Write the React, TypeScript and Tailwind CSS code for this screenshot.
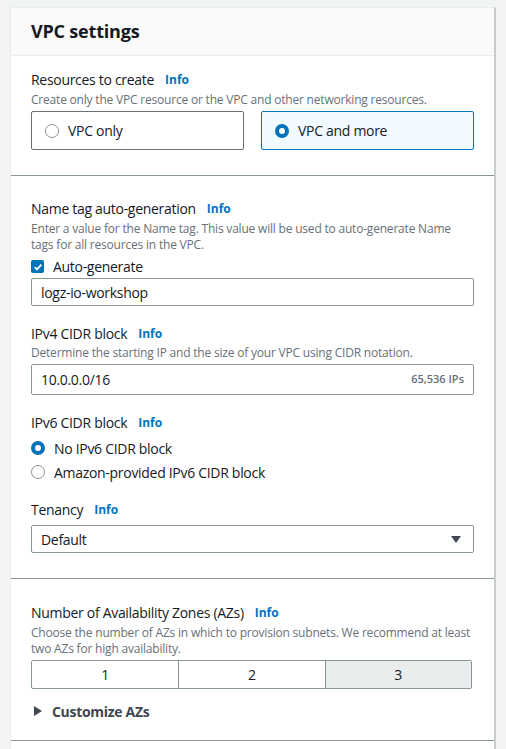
import React from "react";

const font = { fontFamily: '"Open Sans", "Noto Sans", Arial, sans-serif' };

function Info() {
  return <span className="ml-[11px] text-[12px] font-bold tracking-normal text-[#0073bb]">Info</span>;
}

function Label({ children }: { children: React.ReactNode }) {
  return (
    <div className="flex h-5 items-center text-[14px] leading-5 tracking-[-0.3px] text-[#16191f]">
      {children}
      <Info />
    </div>
  );
}

function Desc({ children }: { children: React.ReactNode }) {
  return <p className="text-[12px] leading-4 tracking-[-0.2px] text-[#687078]">{children}</p>;
}

function Radio({ checked }: { checked?: boolean }) {
  return checked ? (
    <span className="box-border inline-block h-[14px] w-[14px] shrink-0 rounded-full border-[4px] border-[#0073bb] bg-white" />
  ) : (
    <span className="box-border inline-block h-[14px] w-[14px] shrink-0 rounded-full border border-[#879596] bg-white" />
  );
}

export default function App() {
  return (
    <div className="min-h-[749px] bg-[#f2f3f3] pl-[10px] pt-[7px]" style={font}>
      <div className="w-[486px] border-l border-t border-r-2 border-[#eaeded] border-r-[#c9cccd] bg-white">
        <div className="flex h-[48px] items-center border-b border-[#eaeded] bg-[#fafafa] px-5">
          <h2 className="text-[18px] font-bold tracking-[-0.2px] text-[#16191f]">VPC settings</h2>
        </div>

        <section className="border-b border-[#879596] px-5 pb-[25px] pt-[14px]">
          <Label>Resources to create</Label>
          <div className="mt-[2px]">
            <Desc>Create only the VPC resource or the VPC and other networking resources.</Desc>
          </div>
          <div className="mt-[3px] grid grid-cols-2 gap-[17px]">
            <div className="flex h-[39px] items-center gap-[9px] rounded-[2px] border border-[#687078] px-[13px] text-[14px] tracking-[-0.3px] text-[#16191f]">
              <Radio />
              VPC only
            </div>
            <div className="flex h-[39px] items-center gap-[9px] rounded-[2px] border border-[#0073bb] bg-[#f1faff] px-[13px] text-[14px] tracking-[-0.3px] text-[#16191f]">
              <Radio checked />
              VPC and more
            </div>
          </div>
        </section>

        <section className="border-b border-[#879596] px-5 pb-[25px] pt-[23px]">
          <Label>Name tag auto-generation</Label>
          <div className="mt-[2px]">
            <Desc>
              Enter a value for the Name tag. This value will be used to auto-generate Name tags for all resources in
              the VPC.
            </Desc>
          </div>
          <div className="mt-[4px] flex h-[19px] items-center gap-[9px] text-[14px] tracking-[-0.3px] text-[#16191f]">
            <span className="flex h-[13px] w-[13px] items-center justify-center rounded-[2px] bg-[#0073bb]">
              <svg width="10" height="10" viewBox="0 0 10 10">
                <path d="M1.8 5.2 L4 7.4 L8.3 2.6" fill="none" stroke="white" strokeWidth="1.8" />
              </svg>
            </span>
            Auto-generate
          </div>
          <div className="mt-[2px] flex h-[28px] items-center rounded-[2px] border border-[#879596] px-[9px] text-[14px] tracking-[-0.3px] text-[#16191f]">
            logz-io-workshop
          </div>

          <div className="mt-[18px]">
            <Label>IPv4 CIDR block</Label>
          </div>
          <div className="mt-[1px]">
            <Desc>Determine the starting IP and the size of your VPC using CIDR notation.</Desc>
          </div>
          <div className="mt-[3px] flex h-[31px] items-center justify-between rounded-[2px] border border-[#879596] px-[9px] text-[14px] tracking-[-0.3px] text-[#16191f]">
            <span>10.0.0.0/16</span>
            <span className="text-[11px] font-semibold tracking-normal text-[#687078]">65,536 IPs</span>
          </div>

          <div className="mt-[18px]">
            <Label>IPv6 CIDR block</Label>
          </div>
          <div className="mt-[5px] flex h-5 items-center gap-[9px] text-[14px] tracking-[-0.3px] text-[#16191f]">
            <Radio checked />
            No IPv6 CIDR block
          </div>
          <div className="mt-[4px] flex h-5 items-center gap-[9px] text-[14px] tracking-[-0.3px] text-[#16191f]">
            <Radio />
            Amazon-provided IPv6 CIDR block
          </div>

          <div className="mt-[18px]">
            <Label>Tenancy</Label>
          </div>
          <div className="mt-[5px] flex h-[28px] items-center justify-between rounded-[2px] border border-[#879596] pl-[9px] pr-[12px] text-[14px] tracking-[-0.3px] text-[#16191f]">
            <span>Default</span>
            <svg width="10" height="7" viewBox="0 0 10 7">
              <path d="M0 0 H10 L5 7 Z" fill="#414750" />
            </svg>
          </div>
        </section>

        <section className="border-b border-[#879596] px-5 pb-[19px] pt-[24px]">
          <Label>Number of Availability Zones (AZs)</Label>
          <div className="mt-[2px]">
            <Desc>Choose the number of AZs in which to provision subnets. We recommend at least two AZs for high availability.</Desc>
          </div>
          <div className="mr-[2px] mt-[3px] grid h-[29px] grid-cols-3 rounded-[2px] border border-[#879596] text-[14px] text-[#16191f]">
            <div className="flex items-center justify-center">1</div>
            <div className="flex items-center justify-center border-l border-[#879596]">2</div>
            <div className="flex items-center justify-center border-l border-[#879596] bg-[#eaeded]">3</div>
          </div>
          <div className="mt-[12px] flex h-5 items-center gap-[10px] pl-[3px] text-[14px] font-bold tracking-[-0.3px] text-[#414750]">
            <svg width="8" height="10" viewBox="0 0 8 10">
              <path d="M0 0 L8 5 L0 10 Z" fill="#414750" />
            </svg>
            Customize AZs
          </div>
        </section>
        <div className="h-[10px]" />
      </div>
    </div>
  );
}
